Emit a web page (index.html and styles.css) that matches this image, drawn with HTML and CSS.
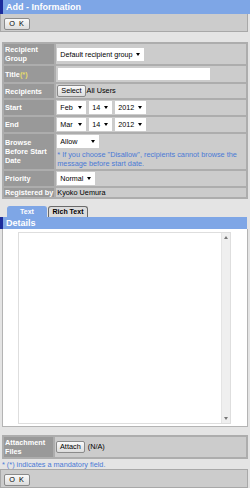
FILE: index.html
```html
<!DOCTYPE html>
<html lang="en">
<head>
    <meta charset="UTF-8">
    <title>Add - Information</title>
    <link rel="stylesheet" href="styles.css">
</head>
<body>
    <div class="title-bar">Add - Information</div>
    <div class="toolbar"><button class="btn btn-ok" type="button">O K</button></div>

    <table class="form">
        <tr>
            <th>Recipient Group</th>
            <td><span class="sel sel-group"><select><option>Default recipient group</option></select></span></td>
        </tr>
        <tr>
            <th>Title<span class="req">(*)</span></th>
            <td><input class="text-input" type="text"></td>
        </tr>
        <tr>
            <th>Recipients</th>
            <td><button class="btn" type="button">Select</button>All Users</td>
        </tr>
        <tr>
            <th>Start</th>
            <td class="dates">
                <span class="sel sel-month"><select><option>Feb</option></select></span>
                <span class="sel sel-day"><select><option>14</option></select></span>
                <span class="sel sel-year"><select><option>2012</option></select></span>
            </td>
        </tr>
        <tr>
            <th>End</th>
            <td class="dates">
                <span class="sel sel-month"><select><option>Mar</option></select></span>
                <span class="sel sel-day"><select><option>14</option></select></span>
                <span class="sel sel-year"><select><option>2012</option></select></span>
            </td>
        </tr>
        <tr>
            <th>Browse Before Start Date</th>
            <td>
                <span class="sel sel-allow"><select><option>Allow</option></select></span>
                <div class="hint">* If you choose "Disallow", recipients cannot browse the message before start date.</div>
            </td>
        </tr>
        <tr>
            <th>Priority</th>
            <td><span class="sel sel-priority"><select><option>Normal</option></select></span></td>
        </tr>
        <tr>
            <th class="nowrap">Registered by</th>
            <td class="plain">Kyoko Uemura</td>
        </tr>
    </table>

    <div class="tabs">
        <span class="tab active">Text</span>
        <span class="tab">Rich Text</span>
    </div>
    <div class="title-bar title-sub">Details</div>
    <div class="editor">
        <div class="textbox">
            <textarea></textarea>
            <div class="scroll">
                <span class="arrow up"></span>
                <span class="arrow down"></span>
            </div>
        </div>
    </div>

    <table class="form form-attach">
        <tr>
            <th>Attachment Files</th>
            <td><button class="btn" type="button">Attach</button> (N/A)</td>
        </tr>
    </table>
    <p class="note">* (*) indicates a mandatory field.</p>
    <div class="toolbar toolbar-bottom"><button class="btn btn-ok" type="button">O K</button></div>
</body>
</html>
```

FILE: styles.css
```css
body {
    margin: 0;
    background: #e4e4e4;
    font-family: "Liberation Sans", Arial, sans-serif;
    font-size: 7.3px;
    color: #000;
}
.title-bar {
    background: #7ea6e6;
    border-left: 3px solid #1c2c9c;
    color: #fff;
    font-weight: bold;
    font-size: 9px;
    line-height: 14px;
    height: 14px;
    padding-left: 3px;
}
.title-sub {
    height: 12px;
    line-height: 12px;
    margin-right: 3px;
}
.toolbar {
    background: #cccccc;
    border: 1px solid #a8a8a8;
    border-top: none;
    margin-right: 2px;
    padding: 4px 3px 2px 3px;
    height: 11px;
}
.btn {
    font-family: "Liberation Sans", Arial, sans-serif;
    font-size: 7.3px;
    height: 12px;
    padding: 0 3px;
    margin: 0 1px 0 0;
    border: 1px solid #8a8a8a;
    border-radius: 2px;
    background: linear-gradient(#fafafa, #dcdcdc);
    color: #000;
    vertical-align: middle;
    line-height: 10px;
}
.btn-ok {
    display: block;
    width: 26px;
    height: 12px;
    letter-spacing: 1px;
}
.form {
    margin: 10px 2px 0 2px;
    width: 246px;
    border-collapse: collapse;
    border: 2px solid #a8a8a8;
}
.form th,
.form td {
    border: 2px solid #adadad;
    line-height: 9px;
    vertical-align: middle;
}
.form th {
    width: 47px;
    background: #999999;
    color: #fff;
    font-weight: bold;
    text-align: left;
    padding: 1px 1px;
}
.form td {
    background: #cccccc;
    padding: 1px 1px;
}
.form th.nowrap {
    white-space: nowrap;
    padding-top: 0;
    padding-bottom: 0;
}
.form td.plain {
    padding-top: 0;
    padding-bottom: 0;
}
.req {
    color: #e6dc6a;
}
.sel {
    position: relative;
    display: inline-block;
    vertical-align: middle;
}
.sel select {
    appearance: none;
    -webkit-appearance: none;
    border: none;
    border-radius: 0;
    background: #fff;
    font-family: "Liberation Sans", Arial, sans-serif;
    font-size: 7.2px;
    height: 13px;
    padding: 0 8px 0 3px;
    margin: 0;
    color: #000;
    display: block;
}
.sel::after {
    content: "";
    position: absolute;
    right: 4px;
    top: 5px;
    border-left: 2px solid transparent;
    border-right: 2px solid transparent;
    border-top: 3px solid #000;
}
.sel-group select { width: 87px; }
.sel-month select { width: 29px; }
.sel-day select { width: 23px; }
.sel-year select { width: 31px; }
.sel-allow select { width: 42px; }
.sel-priority select { width: 38px; }
.dates .sel-day,
.dates .sel-year {
    margin-left: 1px;
}
.text-input {
    width: 152px;
    height: 12px;
    border: none;
    background: #fff;
    padding: 0;
    margin: 1px 0 1px 1px;
    display: block;
}
.hint {
    color: #4a7ad6;
    margin-top: 2px;
    line-height: 9px;
}
.tabs {
    display: flex;
    gap: 1px;
    margin: 7px 0 0 7px;
    height: 11px;
}
.tab {
    width: 40px;
    box-sizing: border-box;
    text-align: center;
    font-weight: bold;
    font-size: 7px;
    line-height: 10px;
    border: 1px solid #6a6a6a;
    border-bottom: none;
    border-radius: 3px 3px 0 0;
    background: #dcdcdc;
    color: #000;
}
.tab.active {
    background: #7ea6e6;
    border-color: #7ea6e6;
    color: #fff;
}
.editor {
    background: #fff;
    margin: 0 2px 0 2px;
    border: 1px solid #b4b4b4;
    border-top: none;
    padding: 3px 16px 2px 15px;
}
.textbox {
    display: flex;
    height: 190px;
    border: 1px solid #dedede;
}
.textbox textarea {
    flex: 1;
    border: none;
    resize: none;
    outline: none;
    margin: 0;
    padding: 2px;
    font-family: "Liberation Sans", Arial, sans-serif;
    font-size: 7.3px;
}
.scroll {
    width: 8px;
    background: #efefef;
    border-left: 1px solid #e4e4e4;
    display: flex;
    flex-direction: column;
    justify-content: space-between;
    align-items: center;
    padding: 3px 0;
}
.arrow {
    width: 0;
    height: 0;
    border-left: 2px solid transparent;
    border-right: 2px solid transparent;
}
.arrow.up {
    border-bottom: 3px solid #777;
}
.arrow.down {
    border-top: 3px solid #777;
}
.form-attach {
    margin-top: 8px;
}
.form-attach td {
    padding: 3px 1px;
}
.note {
    color: #4a7ad6;
    margin: 1px 0 0 2px;
    line-height: 9px;
}
.toolbar-bottom {
    border-top: 1px solid #a8a8a8;
}
```
